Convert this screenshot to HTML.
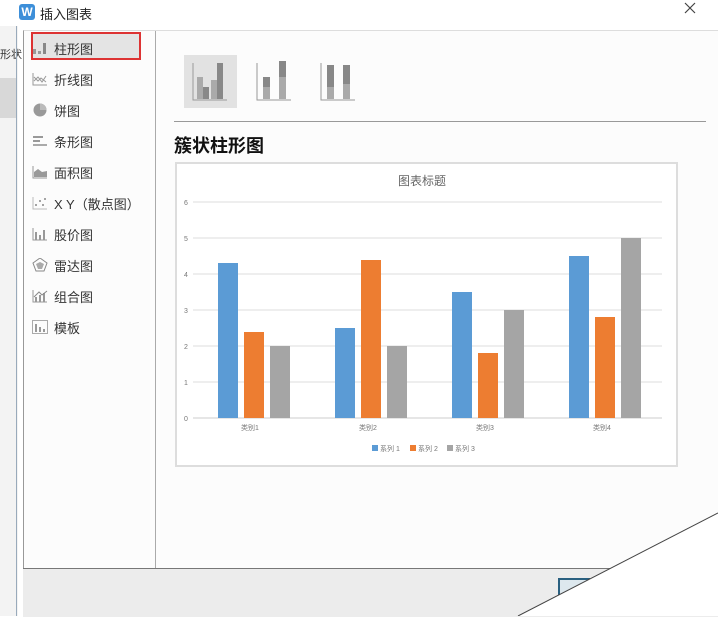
<!DOCTYPE html>
<html><head><meta charset="utf-8"><style>
body{margin:0;width:718px;height:616px;overflow:hidden;background:#fff;position:relative;font-family:"Liberation Sans","Noto Sans CJK SC",sans-serif;}
.a{position:absolute}
.item{position:absolute;left:54px;font-size:13px;color:#333}
.ic{position:absolute;left:32px;width:16px;height:14px}
</style></head><body>
<div class="a" style="left:0;top:0;width:718px;height:26px;background:#fff"></div>
<div class="a" style="left:19px;top:4px;width:16px;height:16px;background:#3d8fd9;border-radius:3px;color:#fff;font-size:12px;line-height:16px;text-align:center;font-weight:bold">W</div>
<div class="a" style="left:40px;top:4px;font-size:13px;color:#222">插入图表</div>
<svg class="a" style="left:684px;top:2px" width="12" height="12"><path d="M1 1L11 11M11 1L1 11" stroke="#444" stroke-width="1.2"/></svg>
<div class="a" style="left:0;top:26px;width:18px;height:590px;background:#f3f3f3"></div>
<div class="a" style="left:0;top:78px;width:16px;height:40px;background:#d8d8d8"></div>
<div class="a" style="left:0;top:46px;font-size:11px;color:#333">形状</div>
<div class="a" style="left:16px;top:26px;width:1px;height:590px;background:#9ab"></div>
<div class="a" style="left:23px;top:30px;width:695px;height:538px;background:#fcfcfc;border-left:1px solid #999;border-top:1px solid #ddd"></div>
<div class="a" style="left:155px;top:31px;width:1px;height:537px;background:#aaa"></div>
<div class="a" style="left:23px;top:568px;width:695px;height:48px;background:#ececec;border-top:1px solid #777"></div>
<div class="a" style="left:558px;top:578px;width:30px;height:20px;border-left:2px solid #2a6080;border-top:2px solid #2a6080;background:#dde8ee"></div>
<svg class="a" style="left:0;top:0" width="718" height="616"><polygon points="718,513 718,616 518,616" fill="#fff"/><line x1="718" y1="513" x2="518" y2="616" stroke="#444" stroke-width="1"/></svg>
<div class="a" style="left:31px;top:32px;width:106px;height:24px;border:2px solid #d33;background:#e4e4e4"></div>
<svg class="ic" style="top:41px" viewBox="0 0 16 14"><rect x="1" y="8" width="3" height="5" fill="#999"/><rect x="6" y="10" width="3" height="3" fill="#999"/><rect x="11" y="2" width="3" height="11" fill="#888"/></svg>
<div class="item" style="top:39px">柱形图</div>
<svg class="ic" style="top:72px" viewBox="0 0 16 14"><path d="M1 1V13H15" stroke="#999" fill="none"/><path d="M2 5L6 9L9 6L14 10M2 9L6 5L10 10L14 4" stroke="#999" fill="none"/></svg>
<div class="item" style="top:70px">折线图</div>
<svg class="ic" style="top:103px" viewBox="0 0 16 14"><circle cx="8" cy="7" r="6.5" fill="#999"/><path d="M8 7V0.5A6.5 6.5 0 0 1 14.5 7Z" fill="#bbb"/></svg>
<div class="item" style="top:101px">饼图</div>
<svg class="ic" style="top:134px" viewBox="0 0 16 14"><rect x="1" y="2" width="10" height="2" fill="#999"/><rect x="1" y="6" width="7" height="2" fill="#999"/><rect x="1" y="10" width="14" height="2" fill="#aaa"/></svg>
<div class="item" style="top:132px">条形图</div>
<svg class="ic" style="top:165px" viewBox="0 0 16 14"><path d="M1 1V13H15" stroke="#999" fill="none"/><path d="M2 12L2 7L6 4L10 7L15 6V12Z" fill="#999"/></svg>
<div class="item" style="top:163px">面积图</div>
<svg class="ic" style="top:196px" viewBox="0 0 16 14"><path d="M1 1V13H15" stroke="#bbb" fill="none"/><circle cx="4" cy="9" r="1" fill="#888"/><circle cx="8" cy="5" r="1" fill="#888"/><circle cx="11" cy="9" r="1" fill="#888"/><circle cx="13" cy="3" r="1" fill="#888"/></svg>
<div class="item" style="top:194px">X Y（散点图）</div>
<svg class="ic" style="top:227px" viewBox="0 0 16 14"><path d="M1 1V13H15" stroke="#999" fill="none"/><rect x="3" y="5" width="2" height="8" fill="#999"/><rect x="7" y="8" width="2" height="5" fill="#999"/><rect x="11" y="3" width="2" height="10" fill="#999"/></svg>
<div class="item" style="top:225px">股价图</div>
<svg class="ic" style="top:258px" viewBox="0 0 16 14"><polygon points="8,0 15,5 12,13 4,13 1,5" fill="none" stroke="#888"/><polygon points="8,4 12,6 10,11 6,11 4,6" fill="#aaa"/></svg>
<div class="item" style="top:256px">雷达图</div>
<svg class="ic" style="top:289px" viewBox="0 0 16 14"><path d="M1 1V13H15" stroke="#999" fill="none"/><rect x="3" y="8" width="2" height="5" fill="#999"/><rect x="7" y="6" width="2" height="7" fill="#999"/><rect x="11" y="4" width="2" height="9" fill="#999"/><path d="M2 8L7 3L10 6L15 2" stroke="#888" fill="none"/></svg>
<div class="item" style="top:287px">组合图</div>
<svg class="ic" style="top:320px" viewBox="0 0 16 14"><rect x="0.5" y="0.5" width="15" height="13" fill="none" stroke="#aaa"/><rect x="3" y="4" width="2" height="8" fill="#999"/><rect x="7" y="7" width="2" height="5" fill="#999"/><rect x="11" y="9" width="2" height="3" fill="#999"/></svg>
<div class="item" style="top:318px">模板</div>
<div class="a" style="left:184px;top:55px;width:53px;height:53px;background:#e2e2e2"></div>
<svg class="a" style="left:184px;top:55px" width="200" height="53"><g fill="#aaa"><path d="M9 8V45H43M73 8V45H107M137 8V45H171" stroke="#999" fill="none"/><rect x="13" y="22" width="6" height="22"/><rect x="19" y="32" width="6" height="12" fill="#888"/><rect x="27" y="25" width="6" height="19"/><rect x="33" y="8" width="6" height="36" fill="#888"/><rect x="79" y="32" width="7" height="12"/><rect x="79" y="22" width="7" height="10" fill="#888"/><rect x="95" y="22" width="7" height="22"/><rect x="95" y="6" width="7" height="16" fill="#888"/><rect x="143" y="32" width="7" height="12"/><rect x="143" y="10" width="7" height="22" fill="#888"/><rect x="159" y="29" width="7" height="15"/><rect x="159" y="10" width="7" height="19" fill="#888"/></g></svg>
<div class="a" style="left:174px;top:121px;width:532px;height:1px;background:#999"></div>
<div class="a" style="left:174px;top:132px;font-size:18px;font-weight:bold;color:#111">簇状柱形图</div>
<div class="a" style="left:175px;top:162px;width:499px;height:301px;border:2px solid #ddd;background:#fff"></div>
<div class="a" style="left:398px;top:172px;font-size:12px;color:#666">图表标题</div>
<svg class="a" style="left:0;top:0" width="718" height="616" font-family="Liberation Sans,Noto Sans CJK SC,sans-serif">
<g stroke="#ddd"><line x1="193" x2="662" y1="202" y2="202"/><line x1="193" x2="662" y1="238" y2="238"/><line x1="193" x2="662" y1="274" y2="274"/><line x1="193" x2="662" y1="310" y2="310"/><line x1="193" x2="662" y1="346" y2="346"/><line x1="193" x2="662" y1="382" y2="382"/><line x1="193" x2="662" y1="418" y2="418" stroke="#ccc"/></g>
<g font-size="7" fill="#777"><text x="184" y="205">6</text><text x="184" y="241">5</text><text x="184" y="277">4</text><text x="184" y="313">3</text><text x="184" y="349">2</text><text x="184" y="385">1</text><text x="184" y="421">0</text>
<text x="241" y="430">类别1</text><text x="359" y="430">类别2</text><text x="476" y="430">类别3</text><text x="593" y="430">类别4</text>
<text x="380" y="451">系列 1</text><text x="418" y="451">系列 2</text><text x="455" y="451">系列 3</text></g>
<rect x="372" y="445" width="6" height="6" fill="#5b9bd5"/><rect x="410" y="445" width="6" height="6" fill="#ed7d31"/><rect x="447" y="445" width="6" height="6" fill="#a5a5a5"/>
<g fill="#5b9bd5"><rect x="218" y="263" width="20" height="155"/><rect x="335" y="328" width="20" height="90"/><rect x="452" y="292" width="20" height="126"/><rect x="569" y="256" width="20" height="162"/></g>
<g fill="#ed7d31"><rect x="244" y="332" width="20" height="86"/><rect x="361" y="260" width="20" height="158"/><rect x="478" y="353" width="20" height="65"/><rect x="595" y="317" width="20" height="101"/></g>
<g fill="#a5a5a5"><rect x="270" y="346" width="20" height="72"/><rect x="387" y="346" width="20" height="72"/><rect x="504" y="310" width="20" height="108"/><rect x="621" y="238" width="20" height="180"/></g>
</svg>
</body></html>
